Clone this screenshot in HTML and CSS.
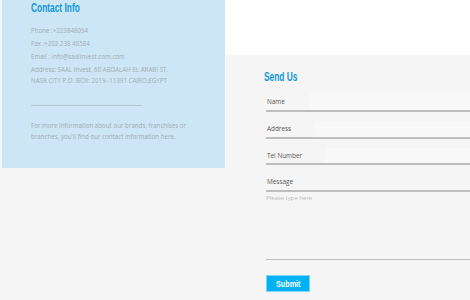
FILE: index.html
```html
<!DOCTYPE html>
<html lang="en">
<head>
    <meta charset="UTF-8">
    <title>Contact</title>
    <link rel="stylesheet" href="styles.css">
</head>
<body>
    <div class="page">
        <div class="info">
            <h2>Contact Info</h2>
            <p>Phone :+223848094</p>
            <p>Fax :+202 238 48584</p>
            <p>Email : info@saalinvest.com.com</p>
            <p class="addr">Address: SAAL Invest, 60 ABDALAH EL ARABI ST.<br>NASR CITY P.O. BOX: 2019- 11391 CAIRO,EGYPT</p>
            <hr>
            <p class="more">For more information about our brands, franchises or<br>branches, you'll find our contact information here.</p>
        </div>
        <div class="side">
            <div class="band"></div>
            <div class="send">
                <h2>Send Us</h2>
                <div class="row"><label>Name</label><input type="text"></div>
                <div class="row"><label>Address</label><input type="text"></div>
                <div class="row"><label>Tel Number</label><input type="text"></div>
                <div class="row"><label>Message</label></div>
                <textarea placeholder="Please type here"></textarea>
                <button><span>Submit</span></button>
            </div>
        </div>
    </div>
</body>
</html>
```

FILE: styles.css
```css
body {
    margin: 0;
    background-color: #f5f5f5;
    font-family: "Open Sans", "Noto Sans", sans-serif;
}
.page {
    display: flex;
    align-items: flex-start;
}
h2 {
    margin: 0;
    font-family: "Liberation Sans", Arial, sans-serif;
    font-weight: bold;
    font-size: 13.5px;
    color: #1198d6;
    transform: scaleX(0.62);
    transform-origin: left center;
}
.info {
    flex-shrink: 0;
    margin-left: 2px;
    width: 223px;
    height: 168px;
    box-sizing: border-box;
    padding: 0 0 0 29px;
    background-color: #cce6f5;
    color: #a3acb4;
}
.info h2 {
    line-height: 16px;
    margin-bottom: 8px;
}
.info p {
    margin: 0;
    font-size: 6.2px;
    line-height: 13px;
}
.info .addr {
    line-height: 11px;
    margin-top: 1px;
}
.info hr {
    width: 111px;
    margin: 19px 0 0 0;
    border: none;
    border-top: 1px solid #b7c6d0;
}
.info .more {
    margin-top: 14px;
    line-height: 11px;
}
.side {
    flex: 1;
    min-width: 0;
}
.band {
    height: 55px;
    background-color: #fff;
}
.send {
    padding-left: 41px;
}
.send h2 {
    line-height: 14px;
    margin: 15px 0 1px -2px;
}
.row {
    display: flex;
    align-items: stretch;
    height: 24.8px;
    border-bottom: 2px solid #bdbdbd;
}
.row label {
    font-size: 6.4px;
    color: #555;
    white-space: nowrap;
    padding: 12px 0 0 1px;
    margin-right: 24px;
}
.row input {
    flex: 1;
    width: 0;
    min-width: 0;
    border: none;
    background-color: #f8f8f8;
    margin: 9px 0 0 0;
}
textarea {
    display: block;
    width: 100%;
    height: 68px;
    box-sizing: border-box;
    border: none;
    border-bottom: 1px solid #bdbdbd;
    background: transparent;
    resize: none;
    padding: 2px 0;
    font-family: "Open Sans", "Noto Sans", sans-serif;
    font-size: 6px;
}
textarea::placeholder {
    color: #bbb;
}
button {
    margin-top: 15px;
    width: 44px;
    height: 17px;
    padding: 0;
    background-color: #00b1f3;
    border: 1px solid #7fd6f7;
    color: #fff;
    font-family: "Liberation Sans", Arial, sans-serif;
    font-weight: bold;
    font-size: 9px;
}
button span {
    display: inline-block;
    transform: scaleX(0.8);
}
```
